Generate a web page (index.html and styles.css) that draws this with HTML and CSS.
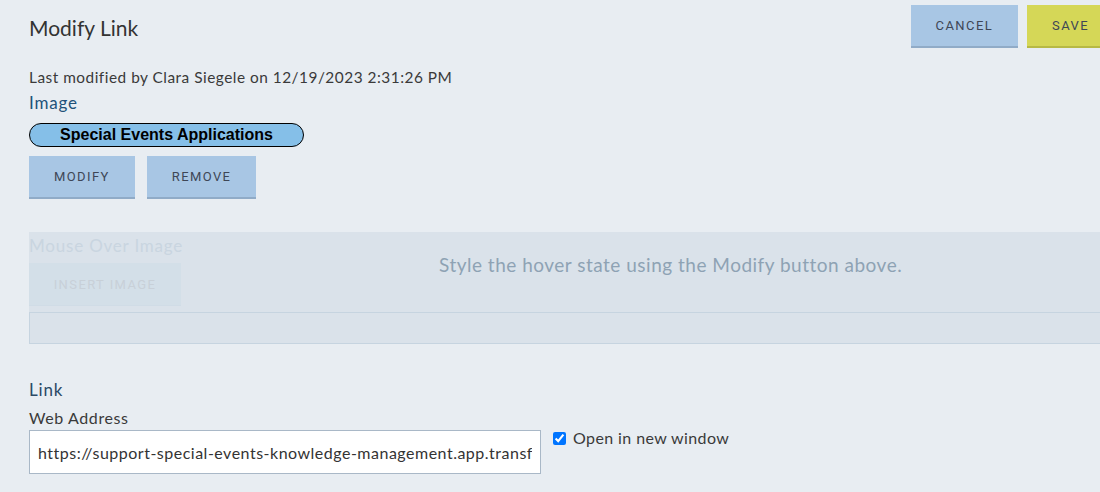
FILE: index.html
```html
<!DOCTYPE html>
<html lang="en">
<head>
    <meta charset="UTF-8">
    <title>Modify Link</title>
    <link rel="stylesheet" href="styles.css">
</head>
<body>
    <div class="page">
        <div class="header">
            <h1 class="title">Modify Link</h1>
            <div class="actions">
                <button class="btn">Cancel</button>
                <button class="btn btn-save">Save</button>
            </div>
        </div>

        <p class="meta">Last modified by Clara Siegele on 12/19/2023 2:31:26 PM</p>
        <div class="section-label">Image</div>
        <div class="pill">Special Events Applications</div>
        <div class="btn-row">
            <button class="btn">Modify</button>
            <button class="btn">Remove</button>
        </div>

        <div class="hover-section">
            <div class="hover-label">Mouse Over Image</div>
            <button class="btn btn-disabled">Insert Image</button>
            <div class="hover-box"></div>
            <div class="hover-note">Style the hover state using the Modify button above.</div>
        </div>

        <div class="section-label link-label">Link</div>
        <div class="field-label">Web Address</div>
        <div class="link-row">
            <input type="text" class="url-input" value="https://support-special-events-knowledge-management.app.transformation.example.com/applications">
            <label class="check">
                <input type="checkbox" checked>
                <span>Open in new window</span>
            </label>
        </div>
    </div>
</body>
</html>
```

FILE: styles.css
```css
body {
    margin: 0;
    padding: 0;
    background: #e8edf2;
    font-family: Lato, "Noto Sans", sans-serif;
    color: #3a3a3a;
    overflow: hidden;
}

.page {
    width: 1085px;
    padding-left: 29px;
}

.header {
    display: flex;
    justify-content: space-between;
    align-items: flex-start;
    padding-top: 5px;
}

.title {
    margin: 10px 0 0;
    font-size: 21px;
    line-height: 26px;
    font-weight: 400;
    color: #333;
}

.actions {
    display: flex;
    gap: 9px;
}

.btn {
    height: 43px;
    padding: 0 25px;
    border: none;
    border-bottom: 2px solid #90abc7;
    background: #a8c6e4;
    color: #3e4656;
    font-family: Roboto, "Liberation Sans", sans-serif;
    font-size: 13px;
    letter-spacing: 1.4px;
    text-transform: uppercase;
    white-space: nowrap;
    cursor: pointer;
}

.btn-save {
    background: #d5d757;
    border-bottom-color: #b7b944;
}

.meta {
    margin: 19px 0 0;
    font-size: 15.4px;
    letter-spacing: 0.5px;
    line-height: 20px;
}

.section-label {
    margin-top: 5px;
    font-size: 17px;
    letter-spacing: 0.8px;
    line-height: 22px;
    color: #22527a;
}

.pill {
    margin-top: 9px;
    width: 273px;
    height: 22px;
    line-height: 22px;
    border: 1px solid #000;
    border-radius: 12px;
    background: #85bfe8;
    color: #000;
    text-align: center;
    font-family: "Liberation Sans", Arial, sans-serif;
    font-weight: bold;
    font-size: 16px;
}

.btn-row {
    display: flex;
    gap: 12px;
    margin-top: 9px;
}

.hover-section {
    position: relative;
    margin-top: 33px;
    padding-top: 3px;
    background: #dae2ea;
}

.hover-label {
    font-size: 17px;
    letter-spacing: 0.8px;
    line-height: 22px;
    color: #c9d5e0;
}

.btn-disabled {
    margin-top: 6px;
    width: 152px;
    padding: 0;
    background: #d3dfe8;
    border-bottom: 1px solid #d0dce6;
    color: #c8d0d8;
    cursor: default;
}

.hover-box {
    margin-top: 6px;
    height: 30px;
    border: 1px solid #c6d4e0;
}

.hover-note {
    position: absolute;
    top: 21px;
    left: 410px;
    font-size: 19px;
    letter-spacing: 0.5px;
    color: #8ea2b4;
}

.link-label {
    margin-top: 35px;
    color: #2b4a66;
}

.field-label {
    margin-top: 7px;
    font-size: 16px;
    letter-spacing: 0.6px;
    line-height: 20px;
}

.link-row {
    display: flex;
    align-items: flex-start;
    margin-top: 2px;
}

.url-input {
    box-sizing: border-box;
    width: 512px;
    height: 44px;
    padding: 0 8px;
    border: 1px solid #a9b8c7;
    background: #fff;
    color: #333;
    font-family: Lato, "Noto Sans", sans-serif;
    font-size: 16px;
    letter-spacing: 0.5px;
}

.check {
    display: flex;
    align-items: center;
    gap: 7px;
    margin-left: 12px;
    font-size: 16px;
    letter-spacing: 0.4px;
    line-height: 16px;
}

.check input {
    margin: 0;
    width: 13px;
    height: 13px;
}
```
